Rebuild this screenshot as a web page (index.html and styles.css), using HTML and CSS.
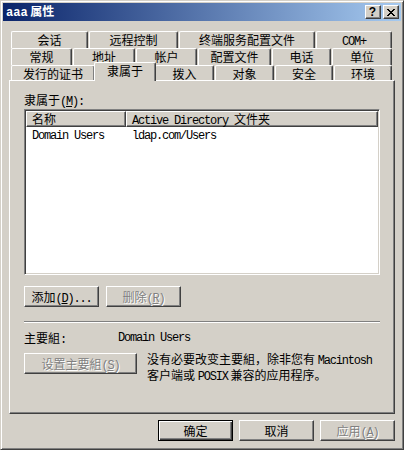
FILE: index.html
```html
<!DOCTYPE html>
<html lang="zh-CN">
<head>
<meta charset="utf-8">
<title>aaa 属性</title>
<link rel="stylesheet" href="styles.css">
</head>
<body>
<div class="win">
  <div class="titlebar">
    <div class="title"><span class="tm">aaa</span> 属性</div>
    <div class="tbtns">
      <div class="tbtn help">?</div>
      <div class="tbtn close"><svg width="8" height="7" viewBox="0 0 8 7"><path d="M0 0h2v1H0zM6 0h2v1H6zM1 1h2v1H1zM5 1h2v1H5zM2 2h4v1H2zM3 3h2v1H3zM2 4h4v1H2zM1 5h2v1H1zM5 5h2v1H5zM0 6h2v1H0zM6 6h2v1H6z" fill="#000"/></svg></div>
    </div>
  </div>
  <div class="client">
    <div class="tabs">
      <div class="trow">
        <div class="tab w77">会话</div>
        <div class="tab w89">远程控制</div>
        <div class="tab w136">终端服务配置文件</div>
        <div class="tab w76"><span class="en">COM+</span></div>
      </div>
      <div class="trow">
        <div class="tab w61">常规</div>
        <div class="tab w62">地址</div>
        <div class="tab w61">帐户</div>
        <div class="tab w73">配置文件</div>
        <div class="tab w59">电话</div>
        <div class="tab w60">单位</div>
      </div>
      <div class="trow last">
        <div class="tab w84">发行的证书</div>
        <div class="tab sel">隶属于</div>
        <div class="tab w59">拨入</div>
        <div class="tab w59">对象</div>
        <div class="tab w58">安全</div>
        <div class="tab w58">环境</div>
      </div>
    </div>
    <div class="panel">
      <div class="lbl">隶属于<span class="en">(<u>M</u>):</span></div>
      <div class="list">
        <div class="lhead">
          <div class="hcol c1">名称</div>
          <div class="hcol c2"><span class="en">Active Directory </span>文件夹</div>
        </div>
        <div class="lrow">
          <div class="cell c1"><span class="en">Domain Users</span></div>
          <div class="cell c2"><span class="en">ldap.com/Users</span></div>
        </div>
      </div>
      <div class="btnrow">
        <div class="btn">添加<span class="en">(<u>D</u>)...</span></div>
        <div class="btn dis">删除<span class="en">(<u>R</u>)</span></div>
      </div>
      <div class="sep"></div>
      <div class="primary">
        <span class="plbl">主要組<span class="en">:</span></span><span class="en">Domain Users</span>
      </div>
      <div class="setrow">
        <div class="btn dis wide">设置主要組<span class="en">(<u>S</u>)</span></div>
        <div class="desc">没有必要改变主要組，除非您有 <span class="en">Macintosh</span><br>客户端或 <span class="en">POSIX</span> 兼容的应用程序。</div>
      </div>
    </div>
    <div class="footer">
      <div class="btn def">确定</div>
      <div class="btn">取消</div>
      <div class="btn dis">应用<span class="en">(<u>A</u>)</span></div>
    </div>
  </div>
</div>
</body>
</html>
```

FILE: styles.css
```css
* { box-sizing: border-box; margin: 0; padding: 0; }
html, body { width: 404px; height: 450px; background: #d4d0c8; overflow: hidden; }
body {
  font-family: "Noto Sans CJK SC", "Noto Sans CJK JP", sans-serif;
  font-size: 12px;
  line-height: 14px;
  color: #000;
}
.en {
  font-family: "Liberation Mono", "Noto Sans CJK SC", monospace;
  font-size: 12px;
  letter-spacing: -1.2px;
}
u { text-decoration: underline; text-underline-offset: 1px; }

.win {
  width: 404px;
  height: 450px;
  border: 1px solid;
  border-color: #d4d0c8 #404040 #404040 #d4d0c8;
  box-shadow: inset 1px 1px #fff, inset -1px -1px #808080;
  padding: 2px;
  display: flex;
  flex-direction: column;
}

.titlebar {
  height: 18px;
  flex: none;
  display: flex;
  align-items: center;
  justify-content: space-between;
  padding: 0 2px 0 3px;
  background: linear-gradient(to right, #0a246a, #a6caf0);
}
.title { color: #fff; font-weight: bold; font-size: 12px; line-height: 18px; white-space: nowrap; }
.tm { font-family: "Liberation Mono", monospace; font-weight: bold; font-size: 12px; }
.tbtns { display: flex; gap: 2px; }
.tbtn {
  width: 16px;
  height: 14px;
  background: #d4d0c8;
  border: 1px solid;
  border-color: #fff #404040 #404040 #fff;
  box-shadow: inset -1px -1px #808080;
  display: flex;
  align-items: center;
  justify-content: center;
}
.help { font-family: "Liberation Sans", sans-serif; font-weight: bold; font-size: 12px; line-height: 12px; padding-right: 1px; }
.close svg { display: block; margin-right: 1px; }

.client {
  flex: 1;
  display: flex;
  flex-direction: column;
  padding: 10px 6px 6px 6px;
}

.tabs { margin: 0 2px; }
.trow { display: flex; height: 17px; }
.trow.last { height: 15px; }
.tab {
  flex: none;
  height: 17px;
  margin-right: 1px;
  border: 1px solid;
  border-bottom: none;
  border-color: #fff #404040 #404040 #fff;
  border-radius: 2px 2px 0 0;
  box-shadow: inset -1px 0 #808080;
  background: #d4d0c8;
  text-align: center;
  line-height: 16px;
  white-space: nowrap;
}
.trow.last .tab { height: 15px; }
.trow.last .tab.sel {
  width: 62px;
  height: 19px;
  margin: -3px -1px 0 -2px;
  position: relative;
  z-index: 1;
}
.w58 { width: 58px; }
.w59 { width: 59px; }
.w60 { width: 60px; }
.w61 { width: 61px; }
.w62 { width: 62px; }
.w73 { width: 73px; }
.w76 { width: 76px; }
.w77 { width: 77px; }
.w84 { width: 84px; }
.w89 { width: 89px; }
.w136 { width: 136px; }

.panel {
  height: 334px;
  flex: none;
  border: 1px solid;
  border-color: #fff #404040 #404040 #fff;
  box-shadow: inset -1px -1px #808080;
  padding: 12px 13px 0 14px;
  display: flex;
  flex-direction: column;
}
.lbl { height: 14px; line-height: 14px; white-space: nowrap; }

.list {
  margin-top: 2px;
  width: 356px;
  height: 166px;
  background: #fff;
  border: 1px solid;
  border-color: #808080 #fff #fff #808080;
  box-shadow: inset 1px 1px #404040, inset -1px -1px #d4d0c8;
  padding: 1px;
}
.lhead { display: flex; height: 16px; }
.hcol {
  height: 16px;
  background: #d4d0c8;
  border: 1px solid;
  border-color: #fff #404040 #404040 #fff;
  box-shadow: inset -1px -1px #808080;
  line-height: 14px;
  padding-left: 5px;
  white-space: nowrap;
}
.hcol.c1 { width: 100px; }
.hcol.c2 { flex: 1; }
.lrow { display: flex; height: 14px; line-height: 14px; }
.cell { padding-left: 6px; white-space: nowrap; }
.cell.c1 { width: 100px; }

.btnrow { display: flex; gap: 7px; margin-top: 11px; }
.btn {
  flex: none;
  width: 75px;
  height: 21px;
  background: #d4d0c8;
  border: 1px solid;
  border-color: #fff #404040 #404040 #fff;
  box-shadow: inset -1px -1px #808080;
  text-align: center;
  line-height: 19px;
  white-space: nowrap;
}
.btn.wide { width: 113px; }
.btn.dis { color: #808080; text-shadow: 1px 1px 0 #fff; }
.btn.def {
  border-color: #000;
  box-shadow: inset 1px 1px #fff, inset -1px -1px #404040, inset -2px -2px #808080;
}

.sep {
  margin-top: 14px;
  width: 356px;
  height: 2px;
  border-top: 1px solid #808080;
  border-bottom: 1px solid #fff;
}
.primary { margin-top: 8px; display: flex; height: 14px; line-height: 14px; white-space: nowrap; }
.plbl { width: 94px; }

.setrow { margin-top: 8px; display: flex; }
.desc { margin-left: 10px; line-height: 13px; margin-top: -1px; white-space: nowrap; }

.footer { margin-top: 6px; display: flex; justify-content: flex-end; gap: 6px; }
```
